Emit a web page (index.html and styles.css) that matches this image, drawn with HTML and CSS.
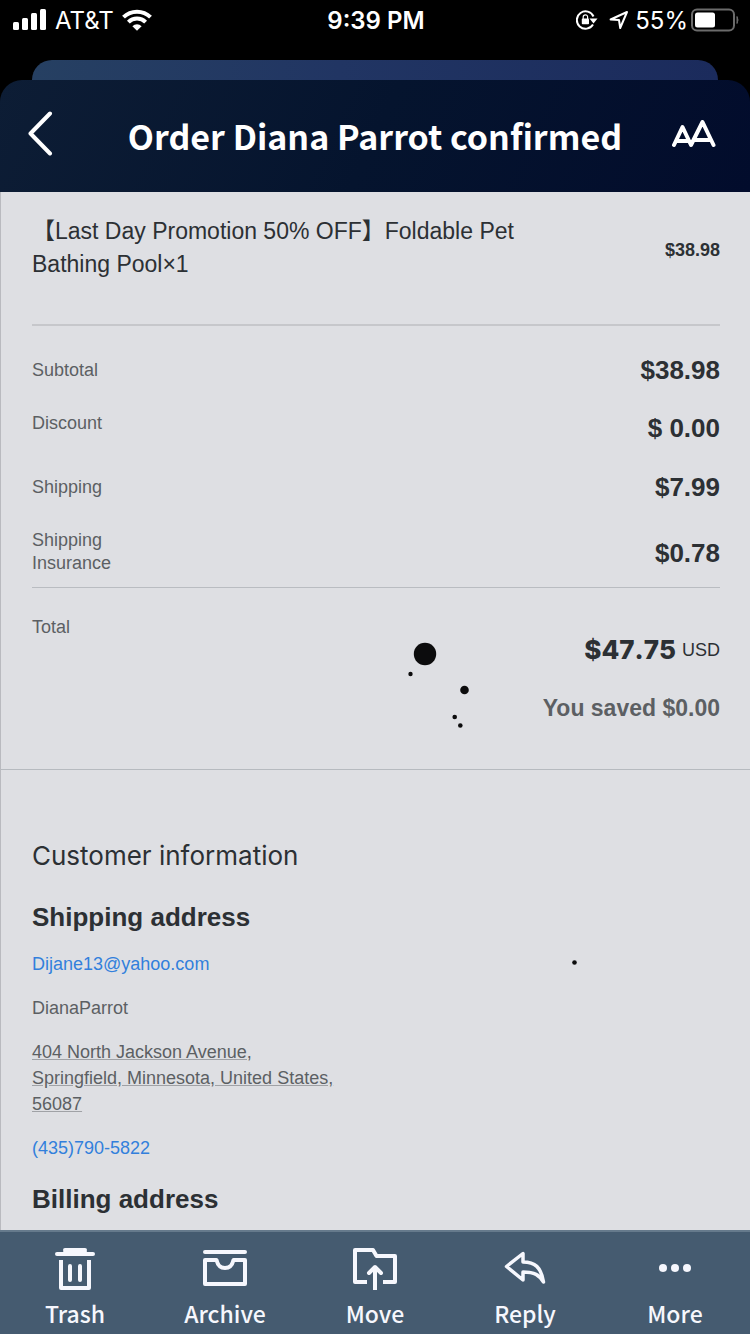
FILE: index.html
```html
<!DOCTYPE html>
<html lang="en">
<head>
  <meta charset="utf-8">
  <meta name="viewport" content="width=device-width, initial-scale=1">
  <title>Order Diana Parrot confirmed</title>
  <link rel="stylesheet" href="styles.css">
</head>
<body>
  <div class="status-bar">
    <div class="status-left">
      <svg width="34" height="22" viewBox="0 0 34 22" fill="#fff">
        <rect x="0" y="13" width="6" height="8" rx="1.5"/>
        <rect x="9" y="9" width="6" height="12" rx="1.5"/>
        <rect x="18" y="4" width="6" height="17" rx="1.5"/>
        <rect x="27" y="0" width="6" height="21" rx="1.5"/>
      </svg>
      <span>AT&amp;T</span>
      <svg width="30" height="22" viewBox="0 0 30 22" fill="none" stroke="#fff" stroke-width="4">
        <path d="M1.5 8.2a19.2 19.2 0 0 1 27 0"/>
        <path d="M6.4 13.1a12.2 12.2 0 0 1 17.2 0"/>
        <path d="M10.4 17.2a6.6 6.6 0 0 1 9.2 0L15 21.8z" fill="#fff" stroke="none"/>
      </svg>
    </div>
    <div class="status-time">9:39 PM</div>
    <div class="status-right">
      <svg width="22" height="20" viewBox="0 0 22 20" fill="none" stroke="#fff" stroke-width="2">
        <path d="M17.5 6.5A8.7 8.7 0 1 0 17 14.500"/>
        <path d="M13.500 8.500h8L17.500 13.400z" fill="#fff" stroke="none"/>
        <rect x="5.800" y="8.600" width="7.200" height="5.700" rx="0.800" fill="#fff" stroke="none"/>
        <path d="M7.200 9V7a2.200 2.200 0 0 1 4.400 0v2" stroke-width="1.200"/>
      </svg>
      <svg class="location" width="20" height="20" viewBox="0 0 20 20" fill="none" stroke="#fff" stroke-width="2" stroke-linejoin="round">
        <path d="M1.6 9.5 18 2 11.2 18 10 10z"/>
      </svg>
      <span>55%</span>
      <svg width="48" height="24" viewBox="0 0 48 24" fill="none">
        <rect x="1" y="1.5" width="42" height="21" rx="5" stroke="#6b6b6b" stroke-width="2"/>
        <rect x="4" y="4.5" width="20" height="15" rx="2.5" fill="#fff"/>
        <path d="M46 8.5q2 3.5 0 7z" fill="#6b6b6b" stroke="#6b6b6b"/>
      </svg>
    </div>
  </div>

  <div class="back-card"></div>
  <header class="header">
    <button aria-label="Back">
      <svg width="26" height="46" viewBox="0 0 26 46" fill="none" stroke="#fff" stroke-width="4" stroke-linecap="round" stroke-linejoin="round">
        <path d="M22 2.5 2.5 22.5 22 42.5"/>
      </svg>
    </button>
    <h1>Order Diana Parrot confirmed</h1>
    <button aria-label="Text size">
      <svg width="44" height="28" viewBox="0 0 44 28" fill="none" stroke="#fff" stroke-width="4" stroke-linecap="round" stroke-linejoin="round">
        <path d="M2 25 10.5 7 19 25 30.5 2 41.5 25M5 21h12M22 20h16"/>
      </svg>
    </button>
  </header>

  <main class="message">
    <section class="order">
      <div class="item">
        <span class="item-name">【Last Day Promotion 50% OFF】Foldable Pet Bathing Pool×1</span>
        <strong class="item-price">$38.98</strong>
      </div>

      <table class="summary">
        <tbody>
          <tr>
            <th scope="row">Subtotal</th>
            <td>$38.98</td>
          </tr>
          <tr class="tall">
            <th scope="row">Discount</th>
            <td>$ 0.00</td>
          </tr>
          <tr>
            <th scope="row">Shipping</th>
            <td>$7.99</td>
          </tr>
          <tr class="insurance">
            <th scope="row">Shipping<br>Insurance</th>
            <td>$0.78</td>
          </tr>
        </tbody>
        <tfoot>
          <tr>
            <th scope="row">Total</th>
            <td>
              <div class="total"><strong>$47.75</strong> <span>USD</span></div>
              <div class="saved">You saved $0.00</div>
            </td>
          </tr>
        </tfoot>
      </table>

      <svg class="dots" width="180" height="330" viewBox="0 0 180 330" fill="#0c0c0d" aria-hidden="true">
        <circle cx="25" cy="14" r="11.2"/>
        <circle cx="10.5" cy="34" r="2.2"/>
        <circle cx="64.5" cy="50" r="4.3"/>
        <circle cx="54.7" cy="77" r="2.3"/>
        <circle cx="60.3" cy="85.5" r="2.3"/>
        <circle cx="174.5" cy="322.5" r="2.3"/>
      </svg>
    </section>

    <section class="customer">
      <h2>Customer information</h2>
      <h3>Shipping address</h3>
      <p><a href="mailto:Dijane13@yahoo.com">Dijane13@yahoo.com</a></p>
      <p>DianaParrot</p>
      <p><a class="address" href="#">404 North Jackson Avenue,<br>Springfield, Minnesota, United States,<br>56087</a></p>
      <p><a href="tel:4357905822">(435)790-5822</a></p>
      <h3>Billing address</h3>
    </section>
  </main>

  <nav class="toolbar">
    <button>
      <svg width="44" height="46" viewBox="0 0 44 46" fill="none" stroke="#f6f7fd" stroke-width="4" stroke-linecap="round">
        <path d="M4 8h36M12 4h20M12 6h20"/>
        <path d="M8 14v28h28V14" stroke-linecap="butt" stroke-linejoin="round"/>
        <path d="M17 20v14M27 20v14"/>
      </svg>
      Trash
    </button>
    <button>
      <svg width="44" height="46" viewBox="0 0 44 46" fill="none" stroke="#f6f7fd" stroke-width="4" stroke-linecap="round" stroke-linejoin="round">
        <path d="M2 6h40M2 14h11.5c1 4 2.5 8 8.5 8s7.5-4 8.5-8H42v24H2z"/>
      </svg>
      Archive
    </button>
    <button>
      <svg width="44" height="46" viewBox="0 0 44 46" fill="none" stroke="#f6f7fd" stroke-width="4" stroke-linejoin="round">
        <path d="M14 36H2V4h18l3.5 6H42v26H30"/>
        <path d="M22 44V22"/>
        <path d="M16 27l6-6 6 6" stroke-linecap="round"/>
      </svg>
      Move
    </button>
    <button>
      <svg width="44" height="46" viewBox="0 0 44 46" fill="none" stroke="#f6f7fd" stroke-width="3.5" stroke-linejoin="round">
        <path d="M3.5 20.5 20 7.5V16C32 16 38 21 40.5 36 36 29 32 26 20 26V34z"/>
      </svg>
      Reply
    </button>
    <button>
      <svg width="44" height="46" viewBox="0 0 44 46" fill="#f6f7fd">
        <circle cx="10" cy="22" r="4"/>
        <circle cx="22" cy="22" r="4"/>
        <circle cx="34" cy="22" r="4"/>
      </svg>
      More
    </button>
  </nav>
</body>
</html>
```
FILE: styles.css
```css
* {
  box-sizing: border-box;
}

body {
  margin: 0;
  height: 100vh;
  display: flex;
  flex-direction: column;
  overflow: hidden;
  background-color: #000;
  color: #2c3034;
  font-family: "Liberation Sans", "Noto Sans CJK SC", Arial, sans-serif;
}

h1, h2, h3, p {
  margin: 0;
}

button {
  padding: 0;
  border: none;
  background: none;
  color: inherit;
  cursor: pointer;
}

svg {
  display: block;
}

/* status bar */
.status-bar {
  flex: none;
  display: grid;
  grid-template-columns: 1fr auto 1fr;
  align-items: center;
  height: 40px;
  padding: 0 11px 0 13px;
  color: #fff;
  font-family: Inter, "Liberation Sans", sans-serif;
  font-size: 24px;
}

.status-left,
.status-right {
  display: flex;
  align-items: center;
  gap: 8px;
}

.status-right {
  justify-content: flex-end;
  gap: 3px;
}

.location {
  margin: 0 3px 0 8px;
}

.status-time {
  font-weight: 600;
}

/* card header */
.back-card {
  flex: none;
  height: 20px;
  margin: 20px 32px 0;
  border-radius: 20px 20px 0 0;
  background: linear-gradient(90deg, #264062, #213563 45%, #1b2b5c);
}

.header {
  flex: none;
  display: grid;
  grid-template-columns: 1fr auto 1fr;
  align-items: center;
  height: 112px;
  padding: 0 34px 4px 28px;
  border-radius: 22px 22px 0 0;
  background: linear-gradient(115deg, #0d1d35, #05142e 50%, #020c2c);
  color: #fff;
}

.header button {
  justify-self: start;
}

.header button:last-child {
  justify-self: end;
}

.header h1 {
  padding: 4px 0 0 6px;
  font-family: "Noto Sans CJK SC", "Noto Sans", sans-serif;
  font-size: 34px;
  line-height: 44px;
  font-weight: 700;
}

/* message */
.message {
  flex: 1;
  min-height: 0;
  overflow: hidden;
  border-left: 1px solid #b9babf;
  background-color: #dedfe3;
}

.order {
  position: relative;
  padding: 23px 30px 46px 31px;
  border-bottom: 1px solid #b6babf;
}

.item {
  display: flex;
  justify-content: space-between;
  gap: 32px;
  padding-bottom: 39px;
  border-bottom: 2px solid #c6c7cb;
}

.item-name {
  max-width: 500px;
  font-size: 23px;
  line-height: 33px;
}

.item-price {
  font-size: 18px;
  line-height: 70px;
}

.summary {
  width: 100%;
  margin-top: 17px;
  border-collapse: collapse;
}

.summary th {
  padding: 16px 0 0;
  color: #5c5f63;
  font-size: 18px;
  line-height: 23px;
  font-weight: normal;
  text-align: left;
  vertical-align: top;
}

.summary td {
  padding: 0;
  font-size: 26px;
  line-height: 30px;
  font-weight: bold;
  text-align: right;
}

.summary tr {
  height: 53px;
}

.summary .tall {
  height: 64px;
}

.summary .insurance {
  height: 74px;
}

.insurance td {
  padding-top: 6px;
}

.summary tfoot {
  border-top: 1px solid #b9bcc1;
}

.summary tfoot th {
  padding-top: 28px;
}

.summary tfoot td {
  padding-top: 47px;
  vertical-align: top;
}

.total {
  display: flex;
  align-items: center;
  justify-content: flex-end;
  gap: 6px;
}

.total strong {
  font-family: Inter, "Liberation Sans", sans-serif;
  font-weight: 800;
  font-kerning: none;
}

.total span {
  font-size: 18px;
  font-weight: normal;
}

.saved {
  margin-top: 28px;
  color: #5c5f63;
  font-size: 23px;
}

/* dark spots lying over the mail */
.dots {
  position: absolute;
  top: 448px;
  left: 399px;
}

.customer {
  padding: 69px 31px 0;
}

.customer h2 {
  margin-bottom: 28px;
  font-family: Inter, "Liberation Sans", sans-serif;
  font-size: 26px;
  line-height: 34px;
  font-weight: normal;
}

.customer h3 {
  margin-top: 22px;
  font-size: 26px;
  line-height: 32px;
}

.customer p {
  margin-top: 18px;
  color: #5c5f63;
  font-size: 18px;
  line-height: 26px;
}

.customer a {
  color: #327fdc;
  text-decoration: none;
}

.customer .address {
  color: inherit;
  text-decoration: underline;
  text-decoration-color: #a0a2a6;
}

/* bottom toolbar */
.toolbar {
  flex: none;
  display: grid;
  grid-template-columns: repeat(5, 1fr);
  height: 104px;
  border-top: 2px solid #667a8c;
  background-color: #455b70;
}

.toolbar button {
  display: flex;
  flex-direction: column;
  align-items: center;
  gap: 3px;
  padding-top: 14px;
  color: #f6f7fd;
  font-family: "Noto Sans CJK SC", "Noto Sans", sans-serif;
  font-size: 23px;
  line-height: 36px;
  font-weight: 500;
}
```
